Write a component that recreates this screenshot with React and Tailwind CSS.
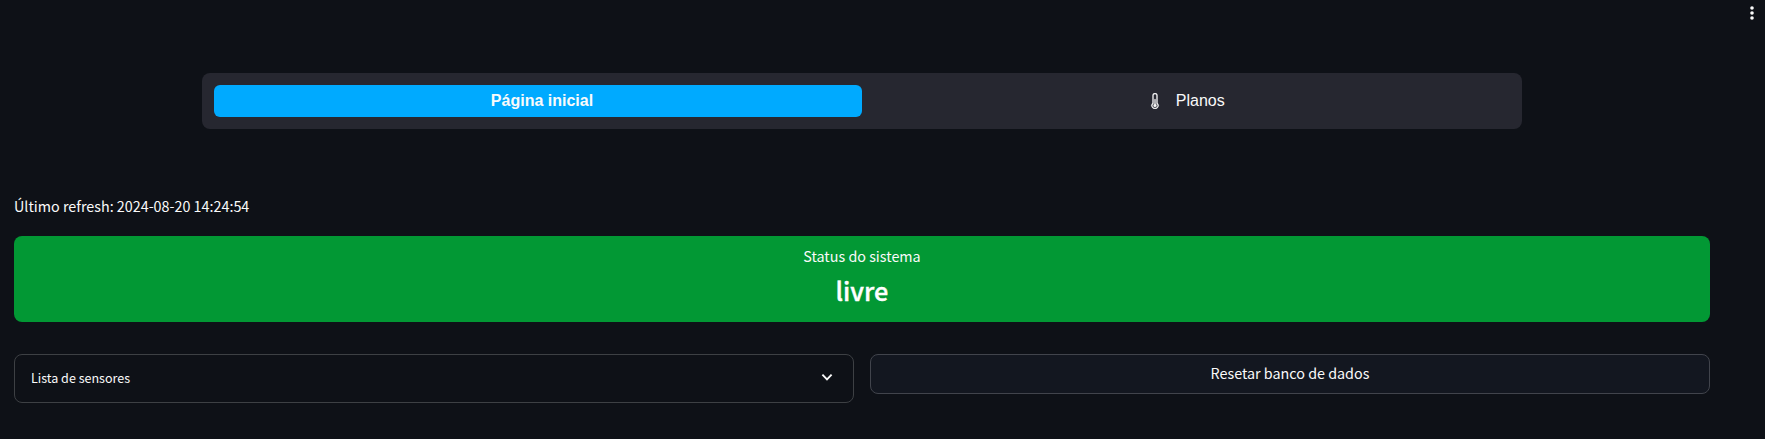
import { BsThermometerHalf } from "react-icons/bs";

function Navigation() {
  return (
    <nav className="mx-auto grid h-14 w-[1320px] grid-cols-2 rounded-lg bg-[#262730] p-3 font-['Liberation_Sans',sans-serif] text-base leading-6">
      <a className="flex h-8 items-center justify-center rounded-[6px] bg-[#00aaff] pl-2 font-bold text-[#fafafa]">
        Página inicial
      </a>
      <a className="flex h-8 items-center justify-center text-[#fafafa]">
        <BsThermometerHalf className="mr-[12.5px] size-4 [stroke-width:0.3px]" />
        Planos
      </a>
    </nav>
  );
}

export default function App() {
  return (
    <div className="relative h-[439px] w-full overflow-hidden bg-[#0e1117] pt-[73px] pl-[14px] font-['Noto_Sans_CJK_SC',sans-serif] text-[#fafafa]">
      <button className="absolute top-[5px] right-[5px] size-4" aria-label="Menu">
        <svg viewBox="0 0 16 16" className="size-4" fill="currentColor">
          <circle cx="8" cy="3" r="1.8" />
          <circle cx="8" cy="8" r="1.8" />
          <circle cx="8" cy="13" r="1.8" />
        </svg>
      </button>
      <main className="w-[1696px]">
        <Navigation />
        <p className="mt-[65px] h-6 text-[14.33px] leading-6">Último refresh: 2024-08-20 14:24:54</p>
        <section className="mt-[18px] flex h-[86px] flex-col items-center rounded-lg bg-[#029834] pt-2">
          <p className="text-[14.33px] leading-6">Status do sistema</p>
          <h2 className="mt-[3px] text-[25.2px] leading-[38px] font-medium text-white [-webkit-text-stroke:0.4px]">livre</h2>
        </section>
        <div className="mt-8 grid grid-cols-2 items-start gap-4">
          <div className="flex h-[49px] items-center justify-between rounded-lg border border-[#3d4044] px-4 pb-[2px]">
            <span className="text-[12.54px] leading-5">Lista de sensores</span>
            <svg viewBox="0 0 20 20" className="mb-px size-5" fill="none" stroke="currentColor" strokeWidth="1.9">
              <path d="m5.4 7.7 4.6 4.6 4.6-4.6" />
            </svg>
          </div>
          <button className="flex h-10 items-center justify-center rounded-lg border border-[#41444c] bg-[#131720] pb-[2px] text-[14.33px] leading-6">
            Resetar banco de dados
          </button>
        </div>
      </main>
    </div>
  );
}
